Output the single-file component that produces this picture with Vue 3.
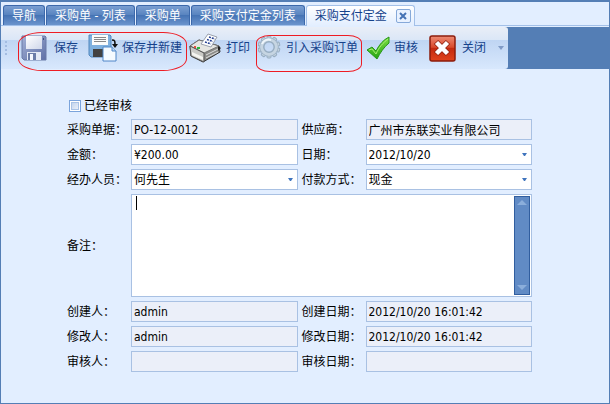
<template>
  <div class="window">
    <nav class="tabs">
      <div v-for="tab in tabs" :key="tab" class="tab" :class="{ active: tab === activeTab }">
        <button type="button" class="tabName" @click="activeTab = tab">{{ tab }}</button>
        <button v-if="tab === activeTab" type="button" class="tabClose" aria-label="关闭标签">
          <svg width="8" height="8" viewBox="0 0 8 8"><path d="M1 1l6 6M7 1L1 7" stroke="#4673b5" stroke-width="2" /></svg>
        </button>
      </div>
    </nav>

    <div class="toolbarRow">
      <div class="toolbar">
        <span class="grip"><i></i><i></i><i></i><i></i></span>

        <div class="group marked saveGroup">
          <button type="button" class="tool save">
            <svg width="26" height="26" viewBox="0 0 26 26">
              <defs>
                <linearGradient id="disk" x1="0" y1="0" x2="1" y2="1">
                  <stop offset="0" stop-color="#a3b1d6" /><stop offset="1" stop-color="#5f70a6" />
                </linearGradient>
                <linearGradient id="paper" x1="0" y1="0" x2="1" y2="1">
                  <stop offset="0" stop-color="#fff" /><stop offset="1" stop-color="#cfd7ea" />
                </linearGradient>
              </defs>
              <path d="M1 1h23l1 1v23H3l-2-2z" fill="url(#disk)" stroke="#6a7aa8" />
              <path d="M5 1h16v13H5z" fill="url(#paper)" />
              <path d="M6 17h14v8H6z" fill="#e3e9f5" />
              <path d="M7 18h8v7H7z" fill="#6b7da9" />
              <path d="M9 19h3v6H9z" fill="#f5f8ff" />
              <path d="M22 3h1v2h-1z" fill="#43527b" />
            </svg>
            <span>保存</span>
          </button>
          <button type="button" class="tool saveNew">
            <svg width="30" height="28" viewBox="0 0 30 28">
              <path d="M1 1h21l1 1v21H3l-2-2z" fill="#7fb0de" stroke="#5186bd" />
              <path d="M4 1h16v10H4z" fill="#fbfbfb" />
              <path d="M6 3.5h12M6 5.5h12M6 7.5h12" stroke="#888" />
              <path d="M5 15h13v8H5z" fill="#424242" />
              <path d="M15 13h9l4 4v10H15z" fill="#f5faff" stroke="#4e86c8" />
              <path d="M24 13v4h4" fill="#bcd7f5" stroke="#4e86c8" />
              <path d="M24 6c3 0 3 1 3 5" fill="none" stroke="#111" stroke-width="1.6" />
              <path d="M24 10h6l-3 4z" fill="#111" />
            </svg>
            <span>保存并新建</span>
          </button>
        </div>

        <button type="button" class="tool print">
          <svg width="33" height="30" viewBox="0 0 33 30">
            <path d="M1 13l9-6 20 6 1 6-17 10L2 23z" fill="#8b8b88" stroke="#333" />
            <path d="M1 13l9-6 20 6-15 7z" fill="#e6e6e2" stroke="#777" />
            <path d="M1 13l14 7v9L2 23z" fill="#cbcbc7" stroke="#555" />
            <path d="M3 19l11 5v3L3 22z" fill="#f5f5f1" />
            <path d="M12 11l7-10 9 3-6 10z" fill="#fff" stroke="#9aa1ae" />
            <path d="M20 4l6 2M18 6.500l6 2M16 9l6 2" stroke="#233e91" stroke-width="1.500" stroke-dasharray="2 1" />
            <path d="M17 22l12-6M17 25l12-6" stroke="#ddd" />
            <path d="M5 13h2v2H5z" fill="#e0503c" /><path d="M8 14h3v2H8z" fill="#29b93b" />
            <path d="M29 13l3 2-3 3z" fill="#222" />
          </svg>
          <span>打印</span>
        </button>

        <div class="group marked importGroup">
          <button type="button" class="tool import">
            <svg width="24" height="26" viewBox="0 0 24 26">
              <g transform="translate(11 12)">
                <rect v-for="n in 10" :key="n" x="-2" y="-11" width="4" height="5" rx="1" fill="#c3d2df" stroke="#97adc1"
                  :transform="`rotate(${n * 36})`" />
                <circle r="7" fill="none" stroke="#97adc1" stroke-width="5" />
                <circle r="7.400" fill="none" stroke="#c6d5e2" stroke-width="3" />
                <path d="M-7-3A7 7 0 0 1 2-7" fill="none" stroke="#eef5fa" stroke-width="2" />
              </g>
            </svg>
            <span>引入采购订单</span>
          </button>
        </div>

        <button type="button" class="tool audit">
          <svg width="24" height="24" viewBox="0 0 24 24">
            <defs>
              <linearGradient id="tick" x1="0" y1="0" x2="0" y2="1">
                <stop offset="0" stop-color="#7de044" /><stop offset="1" stop-color="#25a313" />
              </linearGradient>
            </defs>
            <path d="M1 14l5-3 4 4C13 9 17 4 23 1v6C18 11 14 17 11 23z" fill="url(#tick)" stroke="#279619" />
            <path d="M3 14l3-1 4 5C13 11 17 7 22 3" fill="none" stroke="#a9ef75" />
          </svg>
          <span>审核</span>
        </button>

        <button type="button" class="tool close">
          <svg width="27" height="27" viewBox="0 0 27 27">
            <defs>
              <linearGradient id="red" x1="0" y1="0" x2="0" y2="1">
                <stop offset="0" stop-color="#ed8b74" /><stop offset=".45" stop-color="#d94a2c" />
                <stop offset=".5" stop-color="#c52b10" /><stop offset="1" stop-color="#e0431c" />
              </linearGradient>
            </defs>
            <rect x="1" y="1" width="25" height="25" rx="2" fill="url(#red)" stroke="#8c1d0d" stroke-width="1.5" />
            <path d="M7 7l12 12M19 7L7 19" stroke="#8f2412" stroke-width="6" />
            <path d="M7.500 7.500l11 11M18.500 7.500l-11 11" stroke="#fff" stroke-width="4.500" />
          </svg>
          <span>关闭</span>
        </button>

        <button type="button" class="more" aria-label="更多">
          <svg width="6" height="4" viewBox="0 0 6 4"><path d="M0 0h6L3 4z" fill="#7f9ac5" /></svg>
        </button>
      </div>
    </div>

    <form class="form" @submit.prevent>
      <label class="check"><input v-model="form.audited" type="checkbox">已经审核</label>

      <label for="orderNo">采购单据：</label>
      <input id="orderNo" v-model="form.orderNo" class="field" readonly>
      <label for="supplier">供应商：</label>
      <input id="supplier" v-model="form.supplier" class="field" readonly>

      <label for="amount">金额：</label>
      <input id="amount" v-model="form.amount" class="field">
      <label for="date">日期：</label>
      <div class="combo">
        <input id="date" v-model="form.date" class="field">
        <button type="button" class="arrow" aria-label="选择日期">
          <svg width="5" height="4" viewBox="0 0 5 4"><path d="M0 0h5L3 3H2z" fill="#3f74bd" /></svg>
        </button>
      </div>

      <label for="handler">经办人员：</label>
      <div class="combo">
        <select id="handler" v-model="form.handler" class="field"><option>何先生</option></select>
        <span class="arrow">
          <svg width="5" height="4" viewBox="0 0 5 4"><path d="M0 0h5L3 3H2z" fill="#3f74bd" /></svg>
        </span>
      </div>
      <label for="payment">付款方式：</label>
      <div class="combo">
        <select id="payment" v-model="form.payment" class="field"><option>现金</option></select>
        <span class="arrow">
          <svg width="5" height="4" viewBox="0 0 5 4"><path d="M0 0h5L3 3H2z" fill="#3f74bd" /></svg>
        </span>
      </div>

      <label for="remark">备注：</label>
      <div class="memo">
        <textarea id="remark" v-model="form.remark" rows="6"></textarea>
        <span v-if="!form.remark" class="caret"></span>
        <div class="scroll">
          <svg width="10" height="6" viewBox="0 0 10 6"><path d="M0 5l5-5 5 5z" fill="#8baedb" /></svg>
          <svg width="10" height="6" viewBox="0 0 10 6"><path d="M0 0h10L5 5z" fill="#8baedb" /></svg>
        </div>
      </div>

      <template v-for="item in history" :key="item.id">
        <label :for="item.id">{{ item.label }}：</label>
        <input :id="item.id" class="field" :value="item.value" readonly>
      </template>
    </form>
  </div>
</template>

<script setup>

import { ref, reactive } from 'vue';

const tabs = ['导航', '采购单 - 列表', '采购单', '采购支付定金列表', '采购支付定金'];
const activeTab = ref('采购支付定金');

const form = reactive({
  audited: false,
  orderNo: 'PO-12-0012',
  supplier: '广州市东联实业有限公司',
  amount: '¥200.00',
  date: '2012/10/20',
  handler: '何先生',
  payment: '现金',
  remark: '',
});

const history = [
  { id: 'creator', label: '创建人', value: 'admin' },
  { id: 'createdAt', label: '创建日期', value: '2012/10/20 16:01:42' },
  { id: 'editor', label: '修改人', value: 'admin' },
  { id: 'editedAt', label: '修改日期', value: '2012/10/20 16:01:42' },
  { id: 'auditor', label: '审核人', value: '' },
  { id: 'auditedAt', label: '审核日期', value: '' },
];

</script>

<style>
body {
  background: #e2eeff;
}
</style>

<style scoped>
.window {
  box-sizing: border-box;
  min-height: 100vh;
  border: 1px solid #547eb5;
  border-top-width: 2px;
  background: #e2eeff;
  font-family: "DejaVu Sans Condensed", "Noto Sans CJK SC", sans-serif;
  font-size: 12px;
  line-height: 16px;
  color: #000;
}
button,
input,
select,
textarea {
  margin: 0;
  font: inherit;
}
svg {
  display: block;
  flex: none;
}
.tabs {
  display: flex;
  gap: 1px;
  padding: 3px 2px 0;
  border-bottom: 1px solid #a3c0e8;
}
.tab {
  box-sizing: border-box;
  display: flex;
  align-items: center;
  gap: 9px;
  height: 20px;
  padding: 0 8px;
  border: 1px solid #3b68ab;
  border-bottom: 0;
  border-radius: 3px 3px 0 0;
  background: linear-gradient(#7b9fd2, #5682be 50%, #4674b5 50%, #6b94cd);
  color: #fff;
  white-space: nowrap;
}
.tab.active {
  height: 21px;
  margin-bottom: -1px;
  padding-right: 3px;
  border-color: #a3c0e8;
  background: linear-gradient(#fff, #e2eeff);
  color: #15428b;
}
.tabName {
  padding: 0;
  border: 0;
  background: none;
  color: inherit;
}
.tabClose {
  box-sizing: border-box;
  display: flex;
  align-items: center;
  justify-content: center;
  width: 15px;
  height: 14px;
  padding: 0;
  border: 1px solid #86a9d9;
  border-radius: 2px;
  background: #e9f2ff;
}
.toolbarRow {
  display: flex;
  margin-top: 1px;
  background: #547eb5;
}
.toolbar {
  display: flex;
  align-items: center;
  box-sizing: border-box;
  height: 42px;
  padding: 0 4px;
  border-radius: 0 3px 3px 0;
  background: linear-gradient(#e9eef7, #dbe7f7 30%, #bfd5f3 31%, #cfe1f9 75%, #d8e8fd);
}
.grip {
  display: grid;
  gap: 2px;
  width: 16px;
}
.grip i {
  width: 2px;
  height: 2px;
  background: #a3bce1;
}
.group {
  position: relative;
  display: flex;
}
/* red outline around the highlighted commands */
.marked::after {
  content: "";
  position: absolute;
  border: 1px solid #ee1c24;
  pointer-events: none;
}
.saveGroup::after {
  inset: -1px -5px -8px -3px;
  border-radius: 24px / 12px;
}
.importGroup::after {
  inset: 2px -4px -9px -2px;
  border-radius: 14px / 8px;
}
.tool {
  display: flex;
  align-items: center;
  gap: 4px;
  height: 30px;
  padding: 0;
  border: 0;
  background: none;
  color: #15428b;
  white-space: nowrap;
}
.save {
  gap: 7px;
  margin-right: 10px;
}
.print {
  margin: 0 8px 0 7px;
}
.importGroup {
  margin-right: 8px;
}
.audit {
  margin-right: 11px;
}
.close {
  gap: 6px;
}
.more {
  padding: 0 0 0 12px;
  border: 0;
  background: none;
}
.form {
  display: grid;
  grid-template-columns: 60px 1fr 60px 1fr;
  gap: 4px;
  align-items: center;
  padding: 28px 77px 24px 66px;
}
.form label {
  white-space: nowrap;
}
.check {
  grid-column: 1 / -1;
  display: flex;
  align-items: center;
  gap: 3px;
  padding-left: 2px;
  height: 18px;
}
.check input {
  box-sizing: border-box;
  appearance: none;
  width: 12px;
  height: 12px;
  border: 1px solid #7ba4dc;
  background: linear-gradient(135deg, #b9cde8, #f4f8ff);
  box-shadow: inset 0 0 0 1px #fff, inset 0 0 0 2px #a9c3e6;
}
.check input:checked {
  background: #4673b5;
}
.field {
  box-sizing: border-box;
  width: 100%;
  min-width: 0;
  height: 21px;
  padding: 0 2px;
  border: 1px solid #a9c1e3;
  border-radius: 0;
  background: #fff;
  color: #000;
  outline: 0;
}
.field[readonly] {
  background: #ebeff9;
}
select.field {
  appearance: none;
}
.combo {
  position: relative;
  display: flex;
}
.arrow {
  position: absolute;
  top: 1px;
  right: 1px;
  bottom: 1px;
  display: flex;
  align-items: center;
  padding: 0 4px;
  border: 0;
  background: none;
  pointer-events: none;
}
.memo {
  position: relative;
  grid-column: 2 / -1;
  display: flex;
  padding: 1px;
  border: 1px solid #a9c1e3;
  background: #fff;
}
.memo textarea {
  flex: 1;
  height: 99px;
  box-sizing: border-box;
  padding: 0 3px;
  border: 0;
  outline: 0;
  resize: none;
  background: none;
}
.caret {
  position: absolute;
  top: 1px;
  left: 4px;
  width: 1px;
  height: 14px;
  background: #000;
}
.scroll {
  box-sizing: border-box;
  display: flex;
  flex-direction: column;
  align-items: center;
  justify-content: space-between;
  width: 16px;
  padding: 3px 0;
  border: 1px solid #315e9f;
  background: #618bc5;
}
</style>
